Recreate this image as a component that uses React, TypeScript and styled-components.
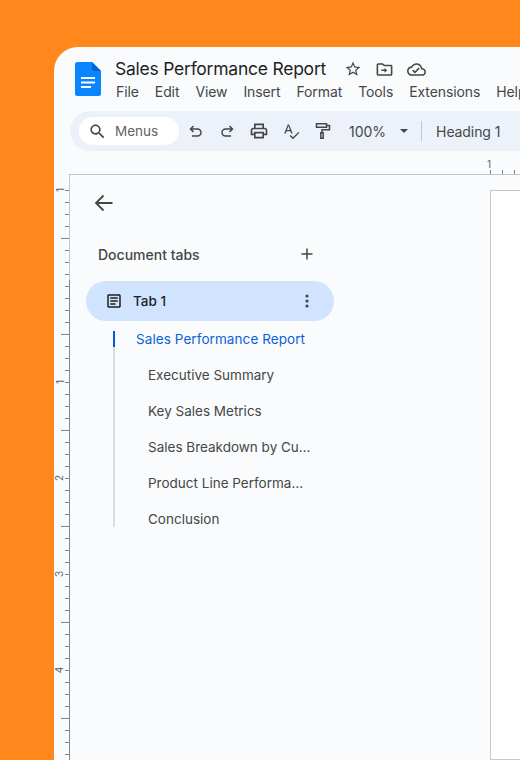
import React from 'react'
import styled, { createGlobalStyle } from 'styled-components'

const GlobalStyle = createGlobalStyle`
  html, body { margin: 0; padding: 0; }
  body { font-family: Inter, "Noto Sans", sans-serif; background: #ff871c; }
`

const MENUS = ['File', 'Edit', 'View', 'Insert', 'Format', 'Tools', 'Extensions', 'Help']
const HEADINGS = [
  'Executive Summary',
  'Key Sales Metrics',
  'Sales Breakdown by Cu…',
  'Product Line Performa…',
  'Conclusion',
]
const INCH_LABELS: Record<number, string> = { 0: '1', 16: '1', 24: '2', 32: '3', 40: '4' }
const TICKS = Array.from({ length: 48 }, (_, i) => i)

const Icon = ({ d, size = 24, color = '#444746' }: { d: string; size?: number; color?: string }) => (
  <svg width={size} height={size} viewBox="0 0 24 24" fill={color}>
    <path d={d} />
  </svg>
)

const paths = {
  search:
    'M15.5 14h-.79l-.28-.27C15.41 12.59 16 11.11 16 9.5 16 5.91 13.09 3 9.5 3S3 5.91 3 9.5 5.91 16 9.5 16c1.61 0 3.09-.59 4.23-1.57l.27.28v.79l5 4.99L20.49 19l-4.99-5zm-6 0C7.01 14 5 11.99 5 9.5S7.01 5 9.5 5 14 7.01 14 9.5 11.99 14 9.5 14z',
  star: 'M22 9.24l-7.19-.62L12 2 9.19 8.63 2 9.24l5.46 4.73L5.82 21 12 17.27 18.18 21l-1.63-7.03L22 9.24zM12 15.4l-3.76 2.27 1-4.28-3.32-2.88 4.38-.38L12 6.1l1.71 4.04 4.38.38-3.32 2.88 1 4.28L12 15.4z',
  move: 'M20 6h-8l-2-2H4c-1.1 0-1.99.9-1.99 2L2 18c0 1.1.9 2 2 2h16c1.1 0 2-.9 2-2V8c0-1.1-.9-2-2-2zm0 12H4V6h5.17l2 2H20v10zm-8-4H8v-2h4v-2l3.5 3-3.5 3v-2z',
  cloud:
    'M19.35 10.04C18.67 6.59 15.64 4 12 4 9.11 4 6.6 5.64 5.35 8.04 2.34 8.36 0 10.91 0 14c0 3.31 2.69 6 6 6h13c2.76 0 5-2.24 5-5 0-2.64-2.05-4.78-4.65-4.96zM19 18H6c-2.21 0-4-1.79-4-4 0-2.05 1.53-3.76 3.56-3.97l1.07-.11.5-.95C8.08 7.14 9.94 6 12 6c2.62 0 4.88 1.86 5.39 4.43l.3 1.5 1.53.11c1.56.1 2.78 1.41 2.78 2.96 0 1.65-1.35 3-3 3zm-9-3.82l-2.09-2.09L6.5 13.5 10 17l6.01-6.01-1.41-1.41z',
  print:
    'M19 8h-1V3H6v5H5c-1.66 0-3 1.34-3 3v6h4v4h12v-4h4v-6c0-1.66-1.34-3-3-3zM8 5h8v3H8V5zm8 14H8v-4h8v4zm4-4h-2v-2H6v2H4v-4c0-.55.45-1 1-1h14c.55 0 1 .45 1 1v4z',
  spell:
    'M11.6 14.500h1.900L8.900 3H7.300L2.700 14.500h1.900l1-2.700h5l1 2.700zm-5.400-4.300L8.100 5.200l1.900 5H6.200zm14.600 2.300l-6.900 6.900-3-3-1.200 1.200 4.200 4.200 8.100-8.100-1.200-1.200z',
  article:
    'M19 5v14H5V5h14m0-2H5c-1.1 0-2 .9-2 2v14c0 1.1.9 2 2 2h14c1.1 0 2-.9 2-2V5c0-1.1-.9-2-2-2zM14 17H7v-2h7v2zm3-4H7v-2h10v2zm0-4H7V7h10v2z',
}

const App = () => {
  return (
    <Page>
      <GlobalStyle />
      <Window>
        <Header>
          <DocsLogo width="26" height="34" viewBox="0 0 26 34">
            <path d="M2.5 0H17l9 9v22.5a2.5 2.5 0 0 1-2.5 2.5h-21A2.5 2.5 0 0 1 0 31.500V2.500A2.500 2.500 0 0 1 2.500 0z" fill="#0b84ff" />
            <path d="M17 0l9 9h-6.500A2.500 2.500 0 0 1 17 6.500z" fill="#0a5fd6" />
            <path d="M6 15h14v2H6zM6 19.500h14v2H6zM6 24h10v2H6z" fill="#fff" />
          </DocsLogo>
          <HeaderText>
            <TitleRow>
              <Title>Sales Performance Report</Title>
              <TitleIcons>
                <Icon d={paths.star} size={18} />
                <Icon d={paths.move} size={19} />
                <Icon d={paths.cloud} size={19} />
              </TitleIcons>
            </TitleRow>
            <MenuBar>
              {MENUS.map((m) => (
                <MenuItem key={m}>{m}</MenuItem>
              ))}
            </MenuBar>
          </HeaderText>
        </Header>

        <Toolbar>
          <SearchPill>
            <Icon d={paths.search} size={19} />
            <SearchLabel>Menus</SearchLabel>
          </SearchPill>
          <ToolIcons>
            <ToolSvg width="18" height="18" viewBox="0 0 18 18" fill="none" stroke="#444746" strokeWidth="1.5">
              <path d="M6.500 4L3.500 7l3 3M3.500 7h7a3.500 3.500 0 0 1 0 7H5" />
            </ToolSvg>
            <ToolSvg width="18" height="18" viewBox="0 0 18 18" fill="none" stroke="#444746" strokeWidth="1.5">
              <path d="M11.500 4l3 3-3 3M14.500 7h-7a3.500 3.500 0 0 0 0 7H13" />
            </ToolSvg>
            <Icon d={paths.print} size={20} />
            <Icon d={paths.spell} size={19} />
            <ToolSvg width="18" height="18" viewBox="0 0 18 18" fill="none" stroke="#444746" strokeWidth="1.5">
              <path d="M2.500 1.800h10v3.400h-10zM12.500 3.500h3v4.300H8v3" />
              <path d="M6.800 10.800h2.400v5.400H6.800z" />
            </ToolSvg>
          </ToolIcons>
          <Zoom>100%</Zoom>
          <Caret />
          <ToolDivider />
          <StyleSelect>Heading 1</StyleSelect>
        </Toolbar>

        <TopRuler>
          <TopRulerLabel>1</TopRulerLabel>
          <TopTicks>
            <TopTick />
            <TopTick />
            <TopTick />
          </TopTicks>
        </TopRuler>

        <Body>
          <SideRuler>
            <RulerCap />
            {TICKS.map((i) => (
              <RulerRow key={i} $inMargin={i < 8}>
                {INCH_LABELS[i] && <RulerLabel>{INCH_LABELS[i]}</RulerLabel>}
                <RulerTick $long={i % 8 === 4} />
              </RulerRow>
            ))}
          </SideRuler>

          <Sidebar>
            <BackButton width="20" height="20" viewBox="0 0 20 20" fill="none" stroke="#444746" strokeWidth="1.800">
              <path d="M18.500 10H2M9.500 2.500L2 10l7.500 7.500" />
            </BackButton>
            <TabsHeader>
              <TabsTitle>Document tabs</TabsTitle>
              <svg width="12" height="12" viewBox="0 0 12 12" stroke="#444746" strokeWidth="1.500">
                <path d="M6 0.500v11M0.500 6h11" />
              </svg>
            </TabsHeader>
            <TabPill>
              <Icon d={paths.article} size={18} color="#1f1f1f" />
              <TabName>Tab 1</TabName>
              <svg width="4" height="14" viewBox="0 0 4 14" fill="#444746">
                <circle cx="2" cy="2" r="1.600" />
                <circle cx="2" cy="7" r="1.600" />
                <circle cx="2" cy="12" r="1.600" />
              </svg>
            </TabPill>
            <Outline>
              <OutlineItem $active>Sales Performance Report</OutlineItem>
              {HEADINGS.map((h) => (
                <OutlineItem key={h}>{h}</OutlineItem>
              ))}
            </Outline>
          </Sidebar>

          <Sheet />
        </Body>
      </Window>
    </Page>
  )
}

export default App

const Page = styled.div`
  width: 520px;
  height: 760px;
  overflow: hidden;
  background: #ff871c;
  padding: 47px 0 0 54px;
  box-sizing: border-box;
`
const Window = styled.div`
  width: 640px;
  height: 713px;
  background: #f9fbfd;
  border-top-left-radius: 24px;
  display: flex;
  flex-direction: column;
  overflow: hidden;
`
const Header = styled.div`
  display: flex;
  align-items: flex-start;
  height: 64px;
  padding: 11px 0 0 21px;
  box-sizing: border-box;
`
const DocsLogo = styled.svg`
  margin: 4px 14px 0 0;
  flex-shrink: 0;
`
const HeaderText = styled.div`
  display: flex;
  flex-direction: column;
`
const TitleRow = styled.div`
  display: flex;
  align-items: center;
  height: 22px;
`
const Title = styled.div`
  font-size: 17.5px;
  letter-spacing: -0.24px;
  line-height: 22px;
  color: #1f1f1f;
  white-space: nowrap;
`
const TitleIcons = styled.div`
  display: flex;
  align-items: center;
  gap: 13px;
  margin-left: 18px;
`
const MenuBar = styled.div`
  display: flex;
  gap: 16px;
  margin-top: 1px;
  margin-left: 1px;
`
const MenuItem = styled.div`
  font-size: 14px;
  letter-spacing: -0.1px;
  line-height: 22px;
  color: #444746;
  white-space: nowrap;
`
const Toolbar = styled.div`
  display: flex;
  align-items: center;
  height: 40px;
  margin-left: 16px;
  padding-left: 9px;
  background: #edf2fa;
  border-radius: 20px;
  flex-shrink: 0;
`
const SearchPill = styled.div`
  display: flex;
  align-items: center;
  gap: 8px;
  width: 100px;
  height: 28px;
  padding-left: 9px;
  box-sizing: border-box;
  background: #fff;
  border-radius: 14px;
`
const SearchLabel = styled.span`
  font-size: 13.5px;
  color: #5f6368;
`
const ToolIcons = styled.div`
  display: flex;
  align-items: center;
  gap: 13px;
  margin-left: 8px;
`
const ToolSvg = styled.svg`
  flex-shrink: 0;
`
const Zoom = styled.span`
  font-size: 14px;
  color: #444746;
  margin-left: 17px;
`
const Caret = styled.span`
  width: 0;
  height: 0;
  margin-left: 14px;
  border-left: 4.500px solid transparent;
  border-right: 4.500px solid transparent;
  border-top: 4.500px solid #444746;
`
const ToolDivider = styled.span`
  width: 1px;
  height: 20px;
  margin-left: 13px;
  background: #c7c7c7;
`
const StyleSelect = styled.span`
  font-size: 14px;
  letter-spacing: -0.1px;
  color: #444746;
  margin-left: 14px;
  white-space: nowrap;
`
const TopRuler = styled.div`
  height: 24px;
  margin-left: 15px;
  padding-left: 421px;
  box-sizing: border-box;
  border-bottom: 1px solid #c4c7c5;
  display: flex;
  flex-direction: column;
  flex-shrink: 0;
`
const TopRulerLabel = styled.div`
  font-size: 10px;
  line-height: 12px;
  margin-top: 7px;
  margin-left: -3px;
  color: #5f6368;
`
const TopTicks = styled.div`
  display: flex;
  gap: 11px;
  margin-top: auto;
`
const TopTick = styled.div`
  width: 1px;
  height: 4px;
  background: #80868b;
`
const Body = styled.div`
  display: flex;
  flex: 1;
  min-height: 0;
`
const SideRuler = styled.div`
  width: 16px;
  flex-shrink: 0;
  display: flex;
  flex-direction: column;
`
const RulerCap = styled.div`
  height: 9px;
  flex-shrink: 0;
  box-sizing: border-box;
  border-right: 1px solid #c4c7c5;
`
const RulerRow = styled.div<{ $inMargin: boolean }>`
  height: 12px;
  flex-shrink: 0;
  box-sizing: border-box;
  display: flex;
  align-items: center;
  justify-content: flex-end;
  border-right: 1px solid ${(p) => (p.$inMargin ? '#c4c7c5' : '#80868b')};
`
const RulerLabel = styled.span`
  font-size: 10px;
  line-height: 12px;
  color: #5f6368;
  transform: rotate(-90deg);
  margin-right: 3px;
`
const RulerTick = styled.span<{ $long: boolean }>`
  height: 1px;
  width: ${(p) => (p.$long ? '8px' : '4px')};
  background: #80868b;
`
const Sidebar = styled.div`
  width: 420px;
  flex-shrink: 0;
  padding: 18px 0 0 16px;
  box-sizing: border-box;
  display: flex;
  flex-direction: column;
`
const BackButton = styled.svg`
  margin-left: 7.500px;
`
const TabsHeader = styled.div`
  display: flex;
  align-items: center;
  justify-content: space-between;
  width: 215px;
  height: 20px;
  margin: 31px 0 0 12px;
`
const TabsTitle = styled.div`
  font-size: 14px;
  font-weight: 500;
  color: #444746;
`
const TabPill = styled.div`
  display: flex;
  align-items: center;
  width: 248px;
  height: 40px;
  margin-top: 17px;
  padding: 0 25px 0 19px;
  box-sizing: border-box;
  background: #d0e4ff;
  border-radius: 20px;
`
const TabName = styled.span`
  flex: 1;
  margin-left: 10px;
  font-size: 13.5px;
  font-weight: 500;
  color: #1f1f1f;
`
const Outline = styled.div`
  display: flex;
  flex-direction: column;
  gap: 20px;
  margin: 10px 0 0 27px;
  width: 200px;
  border-left: 2px solid #dadce0;
`
const OutlineItem = styled.div<{ $active?: boolean }>`
  position: relative;
  height: 16px;
  padding-left: ${(p) => (p.$active ? '21px' : '33px')};
  font-size: 13.5px;
  letter-spacing: ${(p) => (p.$active ? '0.08px' : '0')};
  line-height: 16px;
  color: ${(p) => (p.$active ? '#0b62dc' : '#444746')};
  white-space: nowrap;
  ${(p) =>
    p.$active &&
    `&::before { content: ''; position: absolute; left: -2px; top: 0; width: 2px; height: 16px; background: #0b57d0; }`}
`
const Sheet = styled.div`
  flex: 1;
  margin-top: 15px;
  background: #fff;
  border: 1px solid #c7c7c7;
`
